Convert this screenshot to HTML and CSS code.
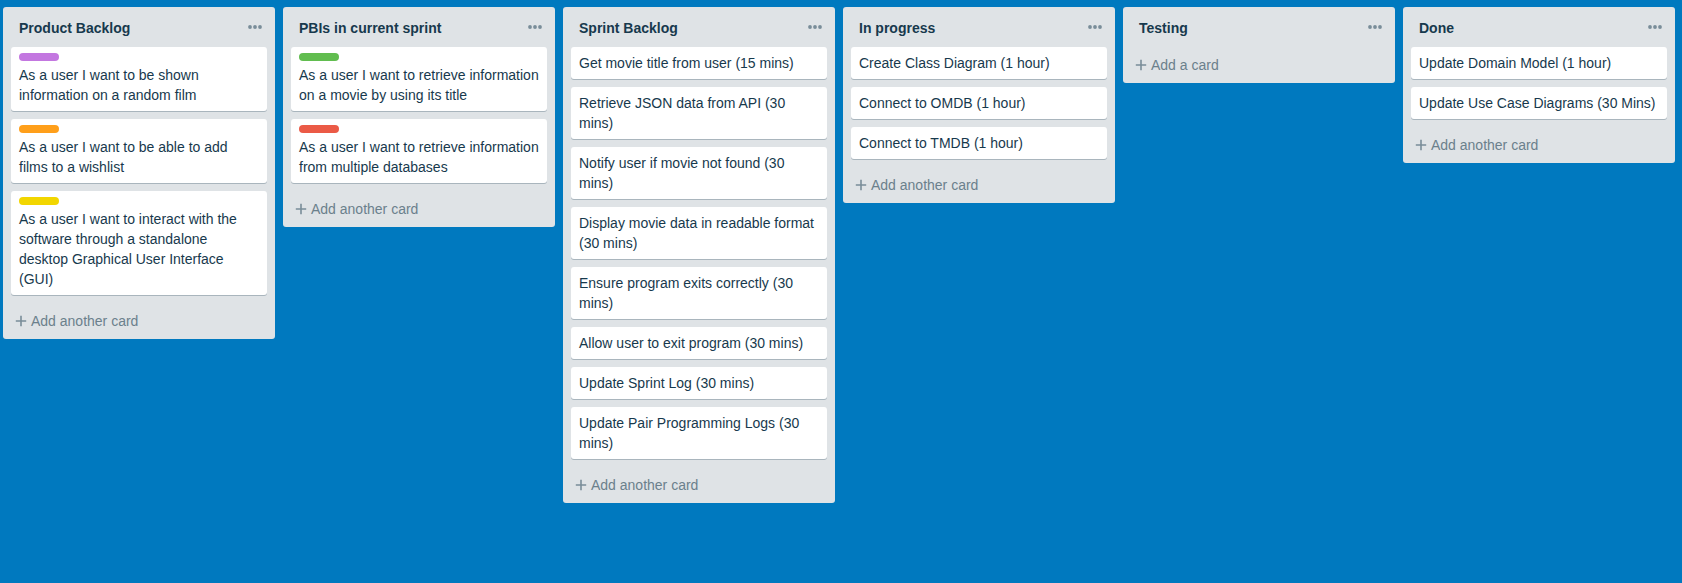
FILE: index.html
```html
<!DOCTYPE html>
<html lang="en">
<head>
<meta charset="utf-8">
<meta name="viewport" content="width=device-width, initial-scale=1">
<title>Sprint board</title>
<link rel="stylesheet" href="styles.css">
</head>
<body>
<svg class="sprites" aria-hidden="true">
  <symbol id="dots" viewBox="0 0 14 4"><circle cx="2" cy="2" r="1.9"/><circle cx="7" cy="2" r="1.9"/><circle cx="12" cy="2" r="1.9"/></symbol>
  <symbol id="plus" viewBox="0 0 12 12"><path d="M5.2.8h1.6v4.4h4.4v1.6H6.800v4.400H5.200V6.800H.8V5.200h4.400z"/></symbol>
</svg>
<main class="board">
  <section class="list">
    <header class="list-header"><h2 class="list-title">Product Backlog</h2><button class="menu" type="button" aria-label="Product Backlog actions"><svg class="dots"><use href="#dots"/></svg></button></header>
    <ul class="cards">
      <li class="card"><span class="label purple"></span>As a user I want to be shown information on a random film</li>
      <li class="card"><span class="label orange"></span>As a user I want to be able to add films to a wishlist</li>
      <li class="card"><span class="label yellow"></span>As a user I want to interact with the software through a standalone desktop Graphical User Interface (GUI)</li>
    </ul>
    <button class="add" type="button"><svg class="plus"><use href="#plus"/></svg>Add another card</button>
  </section>
  <section class="list">
    <header class="list-header"><h2 class="list-title">PBIs in current sprint</h2><button class="menu" type="button" aria-label="PBIs in current sprint actions"><svg class="dots"><use href="#dots"/></svg></button></header>
    <ul class="cards">
      <li class="card"><span class="label green"></span>As a user I want to retrieve information on a movie by using its title</li>
      <li class="card"><span class="label red"></span>As a user I want to retrieve information from multiple databases</li>
    </ul>
    <button class="add" type="button"><svg class="plus"><use href="#plus"/></svg>Add another card</button>
  </section>
  <section class="list">
    <header class="list-header"><h2 class="list-title">Sprint Backlog</h2><button class="menu" type="button" aria-label="Sprint Backlog actions"><svg class="dots"><use href="#dots"/></svg></button></header>
    <ul class="cards">
      <li class="card">Get movie title from user (15 mins)</li>
      <li class="card">Retrieve JSON data from API (30 mins)</li>
      <li class="card">Notify user if movie not found (30 mins)</li>
      <li class="card">Display movie data in readable format (30 mins)</li>
      <li class="card">Ensure program exits correctly (30 mins)</li>
      <li class="card">Allow user to exit program (30 mins)</li>
      <li class="card">Update Sprint Log (30 mins)</li>
      <li class="card">Update Pair Programming Logs (30 mins)</li>
    </ul>
    <button class="add" type="button"><svg class="plus"><use href="#plus"/></svg>Add another card</button>
  </section>
  <section class="list">
    <header class="list-header"><h2 class="list-title">In progress</h2><button class="menu" type="button" aria-label="In progress actions"><svg class="dots"><use href="#dots"/></svg></button></header>
    <ul class="cards">
      <li class="card">Create Class Diagram (1 hour)</li>
      <li class="card">Connect to OMDB (1 hour)</li>
      <li class="card">Connect to TMDB (1 hour)</li>
    </ul>
    <button class="add" type="button"><svg class="plus"><use href="#plus"/></svg>Add another card</button>
  </section>
  <section class="list">
    <header class="list-header"><h2 class="list-title">Testing</h2><button class="menu" type="button" aria-label="Testing actions"><svg class="dots"><use href="#dots"/></svg></button></header>
    <button class="add" type="button"><svg class="plus"><use href="#plus"/></svg>Add a card</button>
  </section>
  <section class="list">
    <header class="list-header"><h2 class="list-title">Done</h2><button class="menu" type="button" aria-label="Done actions"><svg class="dots"><use href="#dots"/></svg></button></header>
    <ul class="cards">
      <li class="card">Update Domain Model (1 hour)</li>
      <li class="card">Update Use Case Diagrams (30 Mins)</li>
    </ul>
    <button class="add" type="button"><svg class="plus"><use href="#plus"/></svg>Add another card</button>
  </section>
</main>
</body>
</html>
```
FILE: styles.css
```css
* {
  box-sizing: border-box;
}

body {
  margin: 0;
  background: #0079bf;
  color: #17394d;
  font: 14px/20px "Liberation Sans", Arial, sans-serif;
}

.sprites {
  display: none;
}

.board {
  display: flex;
  align-items: flex-start;
  gap: 8px;
  min-height: 100vh;
  padding: 7px 3px;
  overflow-x: auto;
}

.list {
  display: flex;
  flex: 0 0 272px;
  flex-direction: column;
  border-radius: 3px;
  background: #dfe3e6;
}

.list-header {
  display: flex;
  align-items: center;
  justify-content: space-between;
  height: 40px;
  padding: 0 13px 0 16px;
}

.list-title {
  margin: 0;
  padding-top: 2px;
  font-size: 14px;
  line-height: 20px;
}

.menu,
.add {
  display: flex;
  align-items: center;
  border: 0;
  background: none;
  font: inherit;
  cursor: pointer;
}

.menu {
  padding: 8px 0;
}

.dots {
  width: 14px;
  height: 4px;
  fill: #798d99;
}

.cards {
  display: flex;
  flex-direction: column;
  gap: 8px;
  margin: 0 0 8px;
  padding: 0 8px;
  list-style: none;
}

.card {
  padding: 6px 8px;
  border-radius: 3px;
  background: #fff;
  box-shadow: 0 1px 0 rgba(9, 45, 66, 0.25);
}

.label {
  display: block;
  width: 40px;
  height: 8px;
  margin-bottom: 4px;
  border-radius: 4px;
}

.purple { background: #c377e0; }
.orange { background: #ff9f1a; }
.yellow { background: #f2d600; }
.green { background: #61bd4f; }
.red { background: #eb5a46; }

.add {
  gap: 4px;
  padding: 8px 12px;
  color: #6b808c;
}

.plus {
  width: 12px;
  height: 12px;
  fill: #798d99;
}
```
